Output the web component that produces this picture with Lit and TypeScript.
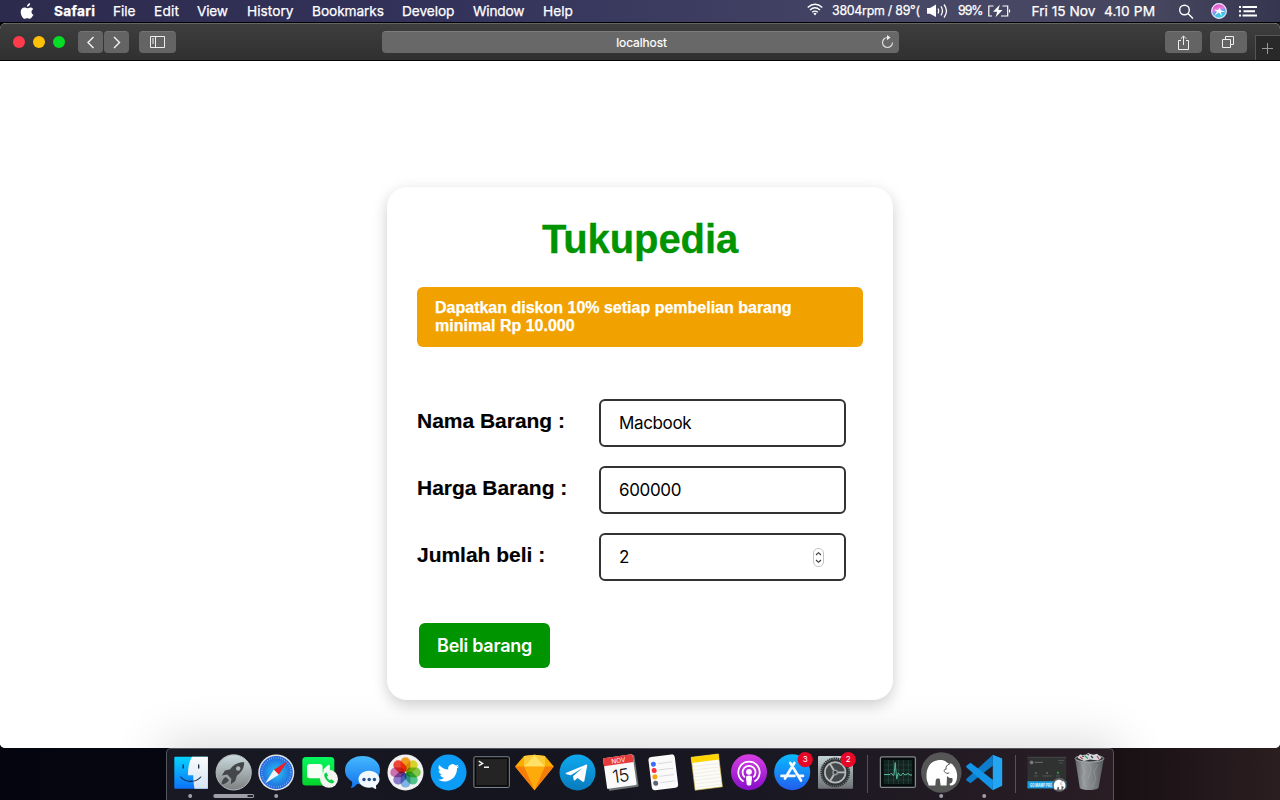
import { LitElement, html, css, svg } from "lit";
import { customElement } from "lit/decorators.js";
import { styleMap } from "lit/directives/style-map.js";

const menus = [
  { label: "Safari", width: 59, text: 41, bold: true },
  { label: "File", width: 41, text: 22.5 },
  { label: "Edit", width: 43, text: 25 },
  { label: "View", width: 50, text: 31 },
  { label: "History", width: 65, text: 46.5 },
  { label: "Bookmarks", width: 90, text: 72 },
  { label: "Develop", width: 71, text: 52.5 },
  { label: "Window", width: 70, text: 51.5 },
  { label: "Help", width: 40, text: 30 },
];

const elephant = svg`
  <path d="M-15.2 6 C-16 -4 -12 -10.5 -5 -12 C-1 -12.8 2 -12.5 4.5 -10.5 L7.5 -8.5 C9 -9.5 10.5 -8.5 11.5 -7 C14.5 -4 15.8 1 15.2 5.5 C14.8 9.5 12.5 12.8 9.8 13 C8 13 7.3 12 8 11 C10.5 11 11.2 8.5 10.5 5.5 C8.5 6.2 6.5 5 5.2 3.5 L4.8 13 H-1.2 L-2 6.5 C-3.5 5.8 -5.5 6.2 -6 7.5 L-6.5 13 H-13.2 C-13.6 10 -15 9 -15.2 6Z" fill="#fff"/>
  <path d="M7.8 -8.3 C5 -7.8 3.8 -5.5 4.3 -3 C3 -3.6 2 -2.5 2.5 -1 C3.5 1 6 1.4 7.5 .5" fill="none" stroke="#555" stroke-width="1"/>`;

const icons = {
  finder: svg`
    <defs><linearGradient id="fa" x2="0" y2="1"><stop stop-color="#06d3ff"/><stop offset="1" stop-color="#0f72fa"/></linearGradient>
    <linearGradient id="fb" x2="0" y2="1"><stop stop-color="#fbfbfc"/><stop offset="1" stop-color="#d5e4f5"/></linearGradient></defs>
    <rect x="5.3" y="8.7" width="33.6" height="32" rx="1" fill="url(#fa)"/>
    <path d="M23 8.7 H38.9 V40.7 H25.5 C24.6 36 24.3 31 24.3 27.3 H19 C19 20 20 13.5 23 8.7Z" fill="url(#fb)"/>
    <path d="M14.2 17v3 M29.7 17v3" stroke="#12263c" stroke-width="1.3" stroke-linecap="round"/>
    <path d="M11.7 29 C17 34.8 26.5 34.8 31.8 29" fill="none" stroke="#12263c" stroke-width="1.1" stroke-linecap="round"/>`,
  rocket: svg`
    <defs><linearGradient id="ra" x2="0" y2="1"><stop stop-color="#c9dade"/><stop offset="1" stop-color="#7f8081"/></linearGradient></defs>
    <circle cx="21.7" cy="24.4" r="17.6" fill="url(#ra)" stroke="#b4babc" stroke-width="1"/>
    <path d="M32.2 14.3 C26 14 21 17 18.2 21.2 L13 22.5 L9.8 27.6 L15.3 26.6 L19.3 30.8 L18.8 36.2 L23.3 33 L24.8 27.7 C29 25 32.3 20.5 32.2 14.3Z M14 29 C11 30 10 33 9.5 36.4 C13 36 15.5 34.8 17 32Z" fill="#43474a"/>
    <circle cx="26.2" cy="20.5" r="2.2" fill="#adb4b6"/>`,
  safari: svg`
    <defs><radialGradient id="sa"><stop stop-color="#22c7f4"/><stop offset="1" stop-color="#2463dd"/></radialGradient></defs>
    <circle cx="21.3" cy="24.4" r="18" fill="#dfe2e6"/><circle cx="21.3" cy="24.4" r="16.5" fill="url(#sa)"/>
    <circle cx="21.3" cy="24.4" r="14.6" fill="none" stroke="#8fc9f6" stroke-width="1.6" stroke-dasharray=".6 1.66"/>
    <path d="M32.3 13.2 L18.8 21.8 L23.8 26.8Z" fill="#ee1d27"/><path d="M10.2 35.3 L18.8 21.8 L23.8 26.8Z" fill="#f2f3f6"/>`,
  facetime: svg`
    <defs><linearGradient id="fc" x2="0" y2="1"><stop stop-color="#05f660"/><stop offset="1" stop-color="#04d32b"/></linearGradient></defs>
    <rect x="4.3" y="9" width="32" height="28.5" rx="3.5" fill="url(#fc)"/>
    <rect x="9" y="16" width="15.6" height="14.2" rx="3.2" fill="#f5fff6"/><path d="M25.5 21.3 L30 17 Q31.8 16.4 31.8 18 V28 L25.5 26Z" fill="#f5fff6"/>
    <circle cx="31" cy="30.8" r="9" fill="#f1f4f1"/>
    <path d="M26.6 25.5 C25 28 28.5 34.5 34.4 35.6 L36.6 33.8 L33.5 31.2 L31.8 32.3 C30.3 31.4 29.3 30 28.9 28.7 L30.1 27.5 L28.5 24.5Z" fill="#04d444"/>`,
  messages: svg`
    <defs><linearGradient id="ma" x2="0" y2="1"><stop stop-color="#45b9ff"/><stop offset="1" stop-color="#1373ec"/></linearGradient></defs>
    <path d="M21.5 8 C31.5 8 39 14.2 39 22.3 C39 30.5 31.5 36.5 21.5 36.5 L16 36 C14 38.7 12 39.8 9.7 40 C11 38 11.5 36 11 33.8 C6.5 30.8 4 27 4 22.3 C4 14.2 11.5 8 21.5 8Z" fill="url(#ma)"/>
    <path d="M28 22.8 C34 22.8 38.5 26.5 38.5 31.3 C38.5 34 37 36 35 37.5 L35.2 41 C33.5 40.8 32.2 40 31.5 39.3 C24 41 17.5 37 17.5 31.3 C17.5 26.5 22 22.8 28 22.8Z" fill="#f1f8ff"/>
    <g fill="#23508c"><circle cx="23" cy="31.5" r="1.7"/><circle cx="28.2" cy="31.5" r="1.7"/><circle cx="33.4" cy="31.5" r="1.7"/></g>`,
  photos: svg`
    <circle cx="21.5" cy="24.4" r="18" fill="#f1f1f2"/>
    ${["#ffa51f", "#e3e02d", "#8bd34d", "#57cd91", "#84bff0", "#9382d4", "#d878b7", "#fa4a3c"].map(
      (c, i) => svg`<rect class="petal" x="16.6" y="9.2" width="9.8" height="14.6" rx="4.9" fill=${c} transform="rotate(${i * 45} 21.5 24.4)"/>`
    )}`,
  twitter: svg`
    <circle cx="21.5" cy="24.4" r="18" fill="#0c9bf5"/>
    <g transform="translate(10.8 14.2) scale(.89)"><path d="M23.95 4.57a10 10 0 01-2.82.77 4.96 4.96 0 002.16-2.72c-.95.55-2 .95-3.12 1.18a4.92 4.92 0 00-8.39 4.48C7.69 8.1 4.07 6.13 1.64 3.16a4.92 4.92 0 001.52 6.57 4.9 4.9 0 01-2.23-.61v.06c0 2.39 1.7 4.38 3.95 4.83a5 5 0 01-2.21.08 4.94 4.94 0 004.6 3.42A9.87 9.87 0 010 19.54a14 14 0 007.55 2.21c9.05 0 14-7.5 14-13.98 0-.21 0-.42-.02-.63a9.94 9.94 0 002.42-2.57z" fill="#fff"/></g>`,
  terminal: svg`
    <rect x="4" y="8.9" width="35.2" height="30.4" rx="1.5" fill="#242424" stroke="#76838a" stroke-width="1.3"/><rect x="5.4" y="10.2" width="32.4" height="27.8" fill="none" stroke="#080808" stroke-width="1.6"/>
    <path d="M8.8 13.2 L12.6 15.5 L8.8 17.6 M14 19.3 H19" fill="none" stroke="#f4f4f4" stroke-width="1.4"/>`,
  sketch: svg`
    <path d="M11 8 L21.5 6.7 L32 8 L40.8 18.5 L21.5 42.3 L2 18.5Z" fill="#fdad00"/>
    <path d="M2 18.5 H40.8 L21.5 42.3Z" fill="#f67d0a"/><path d="M11 18.5 H32 L21.5 42.3Z" fill="#fdaa0a"/>
    <path d="M21.5 6.7 L11 18.5 H32Z" fill="#ffe166"/><path d="M11 8 L21.5 6.7 L11 18.5Z M32 8 L21.5 6.7 L32 18.5Z" fill="#fdcb38"/>`,
  telegram: svg`
    <defs><linearGradient id="ta" x2="0" y2="1"><stop stop-color="#10aaef"/><stop offset="1" stop-color="#087bbd"/></linearGradient></defs>
    <circle cx="21.5" cy="24.4" r="18" fill="url(#ta)"/>
    <path d="M9.8 25 L30.3 16.6 C31 16.5 31.3 16.9 31.1 17.9 L28.4 32.7 C28 34 27.3 34.1 26.4 33.5 L21.5 29.9 L18.7 32.4 L17.9 32.5 L17 28.2 L26.5 20 L14.8 27.2 L9.8 25.9Z" fill="#fff"/>`,
  calendar: svg`
    <g transform="rotate(-8 21.5 24)"><rect x="7.5" y="9" width="30" height="32" rx="1" fill="#6d7578"/><rect x="6" y="8" width="29.8" height="31" rx="1" fill="#fafafa"/>
    <path d="M7 8 H34.8 Q35.8 8 35.8 9 V16 H6 V9Q6 8 7 8Z" fill="#e73a3d"/>
    <text x="21" y="14.5" font-size="6.4" text-anchor="middle" fill="#fff">NOV</text><text x="20.8" y="34" font-size="18" font-weight="300" letter-spacing="-.8" text-anchor="middle" fill="#111">15</text></g>`,
  reminders: svg`
    <g transform="rotate(-7 21.5 24)"><rect x="8" y="7.5" width="26.5" height="33.5" rx="3" fill="#fafafa"/>
    ${["#376dfa", "#fb343b", "#fba00e", "#5b6472"].map((c, i) => svg`<circle cx="12.4" cy=${15 + i * 6.4} r="2.5" fill=${c}/><path d="M17 ${15 + i * 6.4} H31.5" stroke="#ccc" stroke-width=".7"/>`)}</g>`,
  notes: svg`
    <g transform="rotate(-7 21.5 24)"><rect x="8" y="7.5" width="27.5" height="33.2" fill="#fcfbf6" stroke="#d6bd49" stroke-width=".6"/><rect x="8" y="7.5" width="27.5" height="5.7" fill="#ffd400"/>
    ${[17, 20.5, 24, 27.5, 31, 34.5, 38].map((y) => svg`<path d="M8.5 ${y} H35" stroke="#e6e6e3" stroke-width=".6"/>`)}</g>`,
  podcasts: svg`
    <defs><linearGradient id="pa" x2="0" y2="1"><stop stop-color="#d83fe3"/><stop offset="1" stop-color="#860fc9"/></linearGradient></defs>
    <circle cx="21" cy="24.2" r="18" fill="url(#pa)"/>
    <g fill="none" stroke="#fff" stroke-width="1.8"><path d="M15.6 33.5 A10.7 10.7 0 1 1 26.4 33.5"/><path d="M16.9 29.3 A6.5 6.5 0 1 1 25.2 29.3"/></g>
    <circle cx="21" cy="23.8" r="2.9" fill="#fff"/><path d="M18 30 Q18 27.6 21 27.6 Q24 27.6 24 30 L23.2 36.7 Q21 38.4 18.8 36.7Z" fill="#fff"/>`,
  appstore: svg`
    <defs><linearGradient id="aa" x2="0" y2="1"><stop stop-color="#08bcff"/><stop offset="1" stop-color="#235dee"/></linearGradient></defs>
    <circle cx="21.2" cy="24.2" r="18" fill="url(#aa)"/>
    <path d="M23.3 15 L14 30.5 M19.3 15 L30 32.5 M10.5 27.9 H23.5 M28 27.9 H32" stroke="#f4faff" stroke-width="2.7" stroke-linecap="round"/>
    <circle cx="34.2" cy="11.6" r="7.6" fill="#e90728"/><text x="34.2" y="14.4" font-size="8" text-anchor="middle" fill="#fff">3</text>`,
  settings: svg`
    <defs><linearGradient id="ga" x2="0" y2="1"><stop stop-color="#c4d3d8"/><stop offset="1" stop-color="#6e7375"/></linearGradient></defs>
    <rect x="4" y="8" width="35" height="32.8" rx="1" fill="url(#ga)"/>
    <circle cx="21.2" cy="24.4" r="13.9" fill="none" stroke="#303335" stroke-width="2" stroke-dasharray="1.5 .68"/>
    <circle cx="21.2" cy="24.4" r="13.2" fill="#303436"/><circle cx="21.2" cy="24.4" r="10.3" fill="#444849" stroke="#b5babb" stroke-width="1.7"/>
    <path d="M21.2 24.4 L15.8 15.5 M21.2 24.4 H32 M21.2 24.4 L15.8 33.4" stroke="#b5babb" stroke-width="1.9"/><circle cx="21.2" cy="24.4" r="2.9" fill="#939a9e"/><circle cx="21.2" cy="24.4" r="1.4" fill="#303436"/>
    <circle cx="34.2" cy="11.6" r="7.6" fill="#e90728"/><text x="34.2" y="14.4" font-size="8" text-anchor="middle" fill="#fff">2</text>`,
  activity: svg`
    <rect x="3.4" y="8.8" width="35" height="30.6" rx="1.5" fill="#050a0b" stroke="#84888d" stroke-width="1.3"/>
    <rect x="6.6" y="12" width="28.6" height="24.2" fill="#13231f"/>
    <path d="M11.5 12 V36 M16.5 12 V36 M21.5 12 V36 M26.5 12 V36 M31.5 12 V36 M7 17 H35 M7 22 H35 M7 27 H35 M7 32 H35" stroke="#2a4b43" stroke-width=".6"/>
    <path d="M7 26.5 H13 L14.5 25 L16 27.5 L17 27 L18.2 14.5 L19.7 31 L21.2 24.8 L23.5 28 L26 25 L28 27 L31 25.5 L33 27 H35" fill="none" stroke="#58b499" stroke-width="1"/>`,
  mamp: svg`<circle cx="21.3" cy="24.5" r="20.2" fill="#565656"/><g transform="translate(21.8 24.4)">${elephant}</g>`,
  vscode: svg`
    <path d="M29.8 6.8 L39.2 10.6 V37.8 L29.8 42.2Z" fill="#23a5f2"/>
    <path d="M29.8 6.8 L30 17.5 L7.5 35.3 L3.3 32.6 V31Z" fill="#0d7cca"/>
    <path d="M3.3 17.8 L7.5 14.8 L30 32 L29.8 42.2 L3.3 19.2Z" fill="#1394e6"/>`,
  preview: svg`
    <rect x="1.5" y="8.7" width="38.8" height="31.7" fill="#303131"/><path d="M1.5 9.4 H40.3" stroke="#444545" stroke-width="1"/><rect x="1.5" y="33.2" width="38.8" height="7.2" fill="#199ee4"/>
    <circle cx="5.6" cy="14.4" r="1.9" fill="#777"/><path d="M8.5 14.4 H17" stroke="#626262" stroke-width="1.3"/><path d="M32 12.5 H38 M33 15 H37" stroke="#606060" stroke-width=".7"/>
    <circle cx="9.8" cy="25" r="1" fill="#65696a"/><circle cx="21" cy="25" r="1" fill="#65696a"/><circle cx="32" cy="24.7" r="1.2" fill="#2a8f38"/>
    <path d="M8 28 H12 M16.5 28 H25.5 M30 28 H34" stroke="#5e6061" stroke-width=".8"/>
    <text x="4" y="39" font-size="4.3" font-weight="700" textLength="22" lengthAdjust="spacingAndGlyphs" fill="#eaf8ff">GO MAMP PRO</text>
    <circle cx="33.4" cy="36.7" r="7" fill="#626364"/><g transform="translate(33.6 36.5) scale(.38)">${elephant}</g>`,
  trash: svg`
    <defs><linearGradient id="tr"><stop stop-color="#606567"/><stop offset=".3" stop-color="#979b9c"/><stop offset=".65" stop-color="#7c8083"/><stop offset="1" stop-color="#55595c"/></linearGradient></defs>
    <path d="M6 10 L10.8 40 C14 42.7 26 42.7 29.5 40 L35 10Z" fill="url(#tr)"/>
    <ellipse cx="20.5" cy="10.5" rx="14.4" ry="3.5" fill="#303234" stroke="#aeb3b6" stroke-width=".9"/>
    <path d="M8.5 10 L11 6.5 L16 7.5 L19 5 L24 7 L28 5.8 L32.5 10 L29 12.5 L21 11.5 L15 13Z" fill="#d5d6da"/>
    <path d="M11 9 L14 11 M28 8 L30 11" stroke="#b74b50" stroke-width="1.1"/><path d="M16 8 L19 10.5" stroke="#37a06c" stroke-width="1.3"/><path d="M22 8 L24 10 M18 6 L20 7 M13 8 L15 8.5" stroke="#383d50" stroke-width="1.2"/>
    <path d="M12 15 L16 24 L13 29 L17 39 M29 16 L25 24 L27 31 L23 39 M20 14 L22 22 L19 31" fill="none" stroke="#b9bdc0" stroke-width=".6" opacity=".5"/>`,
};

const leftDock = ["finder", "rocket", "safari", "facetime", "messages", "photos", "twitter", "terminal", "sketch", "telegram", "calendar", "reminders", "notes", "podcasts", "appstore", "settings"];

@customElement("app-root")
export class AppRoot extends LitElement {
  static styles = css`
    :host { display: block; width: 1280px; height: 800px; overflow: hidden; font-family: Inter, "Liberation Sans", sans-serif; }
    * { box-sizing: border-box; }
    svg { display: block; overflow: visible; flex: none; }
    .screen { display: flex; flex-direction: column; height: 800px; background: linear-gradient(90deg, #04050f, #090810 50%, #181013 87%, #2b1e21); }
    .menubar { display: flex; align-items: center; height: 23px; flex: none; color: #fff; font-size: 14px; line-height: 22px; background: linear-gradient(90deg, #2d2b4d, #33325b 35%, #474766 73%, #47465f 90%, #373650); border-bottom: 1px solid #000; }
    .apple { width: 54px; padding-left: 20px; }
    .menu, .fit { white-space: nowrap; flex: none; }
    .menu svg text, .fit text { font-size: 13.7px; fill: #fff; stroke: #fff; stroke-width: .25px; }
    .menu .bold { font-weight: 700; }
    .fit .small { font-size: 12.4px; }
    .status { display: flex; align-items: center; margin-left: auto; height: 22px; }
    .window { display: flex; flex-direction: column; height: 725px; flex: none; border-radius: 6px 6px 5px 5px; overflow: hidden; background: #fff; }
    .toolbar { display: flex; align-items: center; height: 38px; flex: none; background: linear-gradient(#3e3e3e, #303030); border-top: 1px solid #656565; border-bottom: 1px solid #050505; padding-left: 13px; }
    .lights { display: flex; gap: 8px; width: 65px; }
    .light { width: 12px; height: 12px; border-radius: 50%; }
    .red { background: #ff3b4b; } .yellow { background: #ffc107; } .green { background: #06dc26; }
    .tool { display: grid; place-items: center; height: 22px; border-radius: 4px; background: #646464; border-top: 1px solid #747474; flex: none; }
    .tool svg { margin-top: -1px; }
    .nav { width: 25px; margin-right: 1px; }
    .wide { width: 37px; }
    .side { margin-left: 9px; }
    .address { display: flex; align-items: center; justify-content: center; width: 517px; height: 22px; margin-left: 206px; border-radius: 4px; background: #686868; border-top: 1px solid #7c7c7c; color: #fff; font-size: 12px; letter-spacing: -.08px; padding-left: 26px; -webkit-text-stroke: .2px #fff; }
    .address span { flex: 1; text-align: center; padding-right: 6px; }
    .address svg { margin: -2px 5px 0 0; }
    .share { margin-left: 266px; }
    .tabs { margin-left: 8px; }
    .plus { display: grid; place-items: center; width: 25px; height: 25px; margin-left: 8px; align-self: flex-end; background: #292929; border: solid #555; border-width: 1px 0 0 1px; }
    .plus svg { margin-left: -2px; }
    .page { flex: 1; min-height: 0; display: flex; flex-direction: column; align-items: center; padding-top: 126px; background: #fff; font-family: "Liberation Sans", Arial, sans-serif; }
    .card { width: 506px; height: 513px; flex: none; padding: 30px; border-radius: 20px; background: #fff; box-shadow: 0 5px 15px rgba(0, 0, 0, .2); }
    h1 { margin: 0; height: 46px; line-height: 44px; text-align: center; color: #009400; font-size: 40px; letter-spacing: -.1px; -webkit-text-stroke: .3px #009400; }
    .notice { height: 60px; margin-top: 24px; padding: 12px 18px; border-radius: 6px; background: #f2a200; color: #fff; font-size: 16px; line-height: 18px; font-weight: 700; -webkit-text-stroke: .25px #fff; }
    .fields { display: grid; gap: 19px; margin-top: 52px; }
    .field { display: grid; grid-template-columns: 182px 247px; height: 48px; }
    label { font-size: 21px; font-weight: 700; line-height: 43px; letter-spacing: -.02px; -webkit-text-stroke: .15px #000; }
    .input { display: flex; align-items: center; justify-content: space-between; border: 2px solid #333; border-radius: 6px; padding: 0 20px 0 18px; font: 17px Inter, sans-serif; letter-spacing: -.35px; color: #000; }
    button { display: block; margin: 42px 0 0 2px; width: 131px; height: 45px; padding: 0; border: 0; border-radius: 6px; background: #009400; color: #fff; font: 600 18px/45px Inter, sans-serif; letter-spacing: -.26px; }
    .glow { align-self: center; width: 930px; height: 30px; margin-top: 58px; flex: none; box-shadow: 0 0 50px 14px rgba(0, 0, 0, .16); }
    .dock { display: flex; width: 948px; height: 52px; margin-left: 166px; padding-left: 1.5px; border: solid #55565d; border-width: 1px 1px 0 1px; border-radius: 5px 5px 0 0; background: linear-gradient(90deg, #191923, #14151f 35%, #1a1822 65%, #2a1d24); }
    .dock svg { margin-top: -1px; font-family: Inter, sans-serif; isolation: isolate; }
    .petal { mix-blend-mode: multiply; }
    .rule { width: 1px; height: 38px; margin: 6px 8.5px 0 10.5px; background: #55515a; flex: none; }
    .rule.second { margin: 6px 9.5px; }
  `;

  private icon(name: string) {
    const dot = ["finder", "safari", "mamp", "vscode"].includes(name);
    return html`<svg width="43" height="52" viewBox="0 0 43 52">
      ${icons[name]}
      ${dot ? svg`<circle cx="21.2" cy="48" r="2" fill="#a09fa9"/>` : ""}
      ${name === "rocket" ? svg`<rect x="1.3" y="46" width="41" height="4" rx="2" fill="#a09fa9"/><rect x="35.3" y="47" width="6" height="2" rx="1" fill="#20202a"/>` : ""}
    </svg>`;
  }

  private label(text: string, width: number, cell: number, bold = false) {
    return html`<div class="menu" style=${styleMap({ width: `${cell}px` })}><svg width=${width} height="22">
      <text class=${bold ? "bold" : ""} x="0" y="16" textLength=${width}>${text}</text></svg></div>`;
  }

  render() {
    return html`<div class="screen">
      <div class="menubar">
        <div class="apple"><svg width="15" height="17" viewBox="0 0 15 17" fill="#fff"><path d="M10.2 0 C10.3 2 8.6 3.8 6.9 3.8 C6.8 2 8.4.3 10.2 0Z M12.9 12.6 C12 14.2 11 15.8 9.7 15.8 C8.7 15.8 8.4 15.2 7.2 15.2 C6 15.2 5.6 15.8 4.7 15.8 C2.8 15.8.7 12 .7 9 C.7 6.1 2.5 4.5 4.4 4.5 C5.6 4.5 6.4 5.2 7.3 5.2 C8.2 5.2 9 4.4 10.5 4.4 C11.6 4.4 12.6 5 13.3 6 C10.7 7.6 11 11 13.8 12Z"/></svg></div>
        ${menus.map((m) => this.label(m.label, m.text, m.width, m.bold))}
        <div class="status">
          <svg width="24" height="22" viewBox="807 0 24 22" fill="none" stroke="#fff" stroke-width="1.4"><path d="M807.7 7.5 Q815 1 822.3 7.5 M810 10 Q815 5.7 820 10 M812.2 12.3 Q815 10 817.8 12.3"/><path d="M813.4 13.5 Q815 12.2 816.6 13.5 L815 15.5Z" fill="#fff" stroke="none"/></svg>
          <svg class="fit" width="95" height="22"><text class="small" x="1" y="15.3" textLength="88">3804rpm / 89°(</text></svg>
          <svg width="32" height="22" viewBox="926 0 32 22"><path d="M927 8 H930 L936 4.5 V17 L930 13.8 H927Z" fill="#fff"/><path d="M938 8.5 Q939.6 11 938 13.5 M941 6.4 Q944 11 941 15.4 M944 4.5 Q949 11 944 17.5" fill="none" stroke="#fff" stroke-width="1.3"/></svg>
          <svg class="fit" width="29" height="22"><text class="small" x="0" y="15.3" textLength="25.5">99%</text></svg>
          <svg width="45" height="22" viewBox="987 0 45 22"><path d="M993.5 6 H988.8 V16 H992 M1002.5 6 H1007.7 V16 H1001" fill="none" stroke="#fff" stroke-width="1.2"/><path d="M999.8 4.8 L993 11.8 H997.2 L995.6 17.2 L1002.5 10 H998.3Z M1009 9 Q1011.5 11 1009 13Z" fill="#fff"/></svg>
          <svg class="fit" width="146" height="22"><text x="-.5" y="16" textLength="64">Fri 15 Nov</text><text x="72" y="16" textLength="51">4.10 PM</text></svg>
          <svg width="102" height="22" viewBox="1178 0 102 22"><g fill="none" stroke="#fff" stroke-width="1.4"><circle cx="1184.5" cy="10" r="4.8"/><path d="M1188 13.5 L1193 18.5"/></g>
            <defs><linearGradient id="siri" x2=".35" y2="1"><stop stop-color="#6557d9"/><stop offset=".3" stop-color="#f25fca"/><stop offset=".5" stop-color="#d884ec"/><stop offset=".65" stop-color="#5aa4f0"/><stop offset="1" stop-color="#35d7df"/></linearGradient></defs>
            <circle cx="1219" cy="11" r="7.4" fill="url(#siri)" stroke="#f1e8ff" stroke-width="1.1"/><path d="M1214 9.5 L1218 10 L1220 7.5 L1220.5 10 L1225.5 12 L1220.8 12 L1222 16 L1218.8 12.5 L1214 16 L1217 11.8Z" fill="#fff"/>
            <path d="M1239 7 H1241 M1239 11.3 H1241 M1239 15.5 H1241 M1242.5 7 H1257 M1243.5 11.3 H1255 M1242.5 15.5 H1257" stroke="#fff" stroke-width="1.9"/></svg>
        </div>
      </div>
      <div class="window">
        <div class="toolbar">
          <div class="lights"><i class="light red"></i><i class="light yellow"></i><i class="light green"></i></div>
          <div class="tool nav"><svg width="8" height="13" fill="none" stroke="#f4f4f4" stroke-width="1.4"><path d="M6.5 1 L1 6.5 L6.5 12"/></svg></div>
          <div class="tool nav"><svg width="8" height="13" fill="none" stroke="#f4f4f4" stroke-width="1.4"><path d="M1 1 L6.5 6.5 L1 12"/></svg></div>
          <div class="tool wide side"><svg width="15" height="12" fill="none" stroke="#eee"><path d="M.5 .5 H14.5 V11.5 H.5Z M5.5 .5 V11.5 M2 3 H4 M2 5 H4 M2 7 H4"/></svg></div>
          <div class="address"><span>localhost</span><svg width="13" height="14" viewBox="0 0 13 14" fill="none" stroke="#ddd" stroke-width="1.2"><path d="M6.5 2.5 A5 5 0 1 0 11.5 7.5"/><path d="M6 0 L9.5 2.6 L6 5.2Z" fill="#eee" stroke="none"/></svg></div>
          <div class="tool wide share"><svg width="13" height="15" fill="none" stroke="#eee"><path d="M4 5.5 H1.5 V14.5 H11.5 V5.5 H9 M6.5 10 V1 M3.8 3.7 L6.5 1 L9.2 3.7"/></svg></div>
          <div class="tool wide tabs"><svg width="13" height="12" fill="none" stroke="#eee"><path d="M.5 3.5 H8.5 V11.5 H.5Z M3.5 3.5 V.5 H11.5 V8.5 H8.5"/></svg></div>
          <div class="plus"><svg width="11" height="11" stroke="#999"><path d="M5.5 0 V11 M0 5.5 H11"/></svg></div>
        </div>
        <main class="page">
          <section class="card">
            <h1>Tukupedia</h1>
            <div class="notice">Dapatkan diskon 10% setiap pembelian barang<br>minimal Rp 10.000</div>
            <div class="fields">
              <div class="field"><label>Nama Barang :</label><div class="input">Macbook</div></div>
              <div class="field"><label>Harga Barang :</label><div class="input">600000</div></div>
              <div class="field"><label>Jumlah beli :</label><div class="input">2<svg width="11" height="19" viewBox="0 0 11 19" fill="none"><rect x=".5" y=".5" width="10" height="18" rx="4.5" stroke="#c4c4c4"/><path d="M3 7 L5.5 4.7 L8 7 M3 12 L5.5 14.3 L8 12" stroke="#333" stroke-width="1.1"/></svg></div></div>
            </div>
            <button>Beli barang</button>
          </section>
          <div class="glow"></div>
        </main>
      </div>
      <nav class="dock">
        ${leftDock.map((n) => this.icon(n))}
        <div class="rule"></div>
        ${["activity", "mamp", "vscode"].map((n) => this.icon(n))}
        <div class="rule second"></div>
        ${["preview", "trash"].map((n) => this.icon(n))}
      </nav>
    </div>`;
  }
}
